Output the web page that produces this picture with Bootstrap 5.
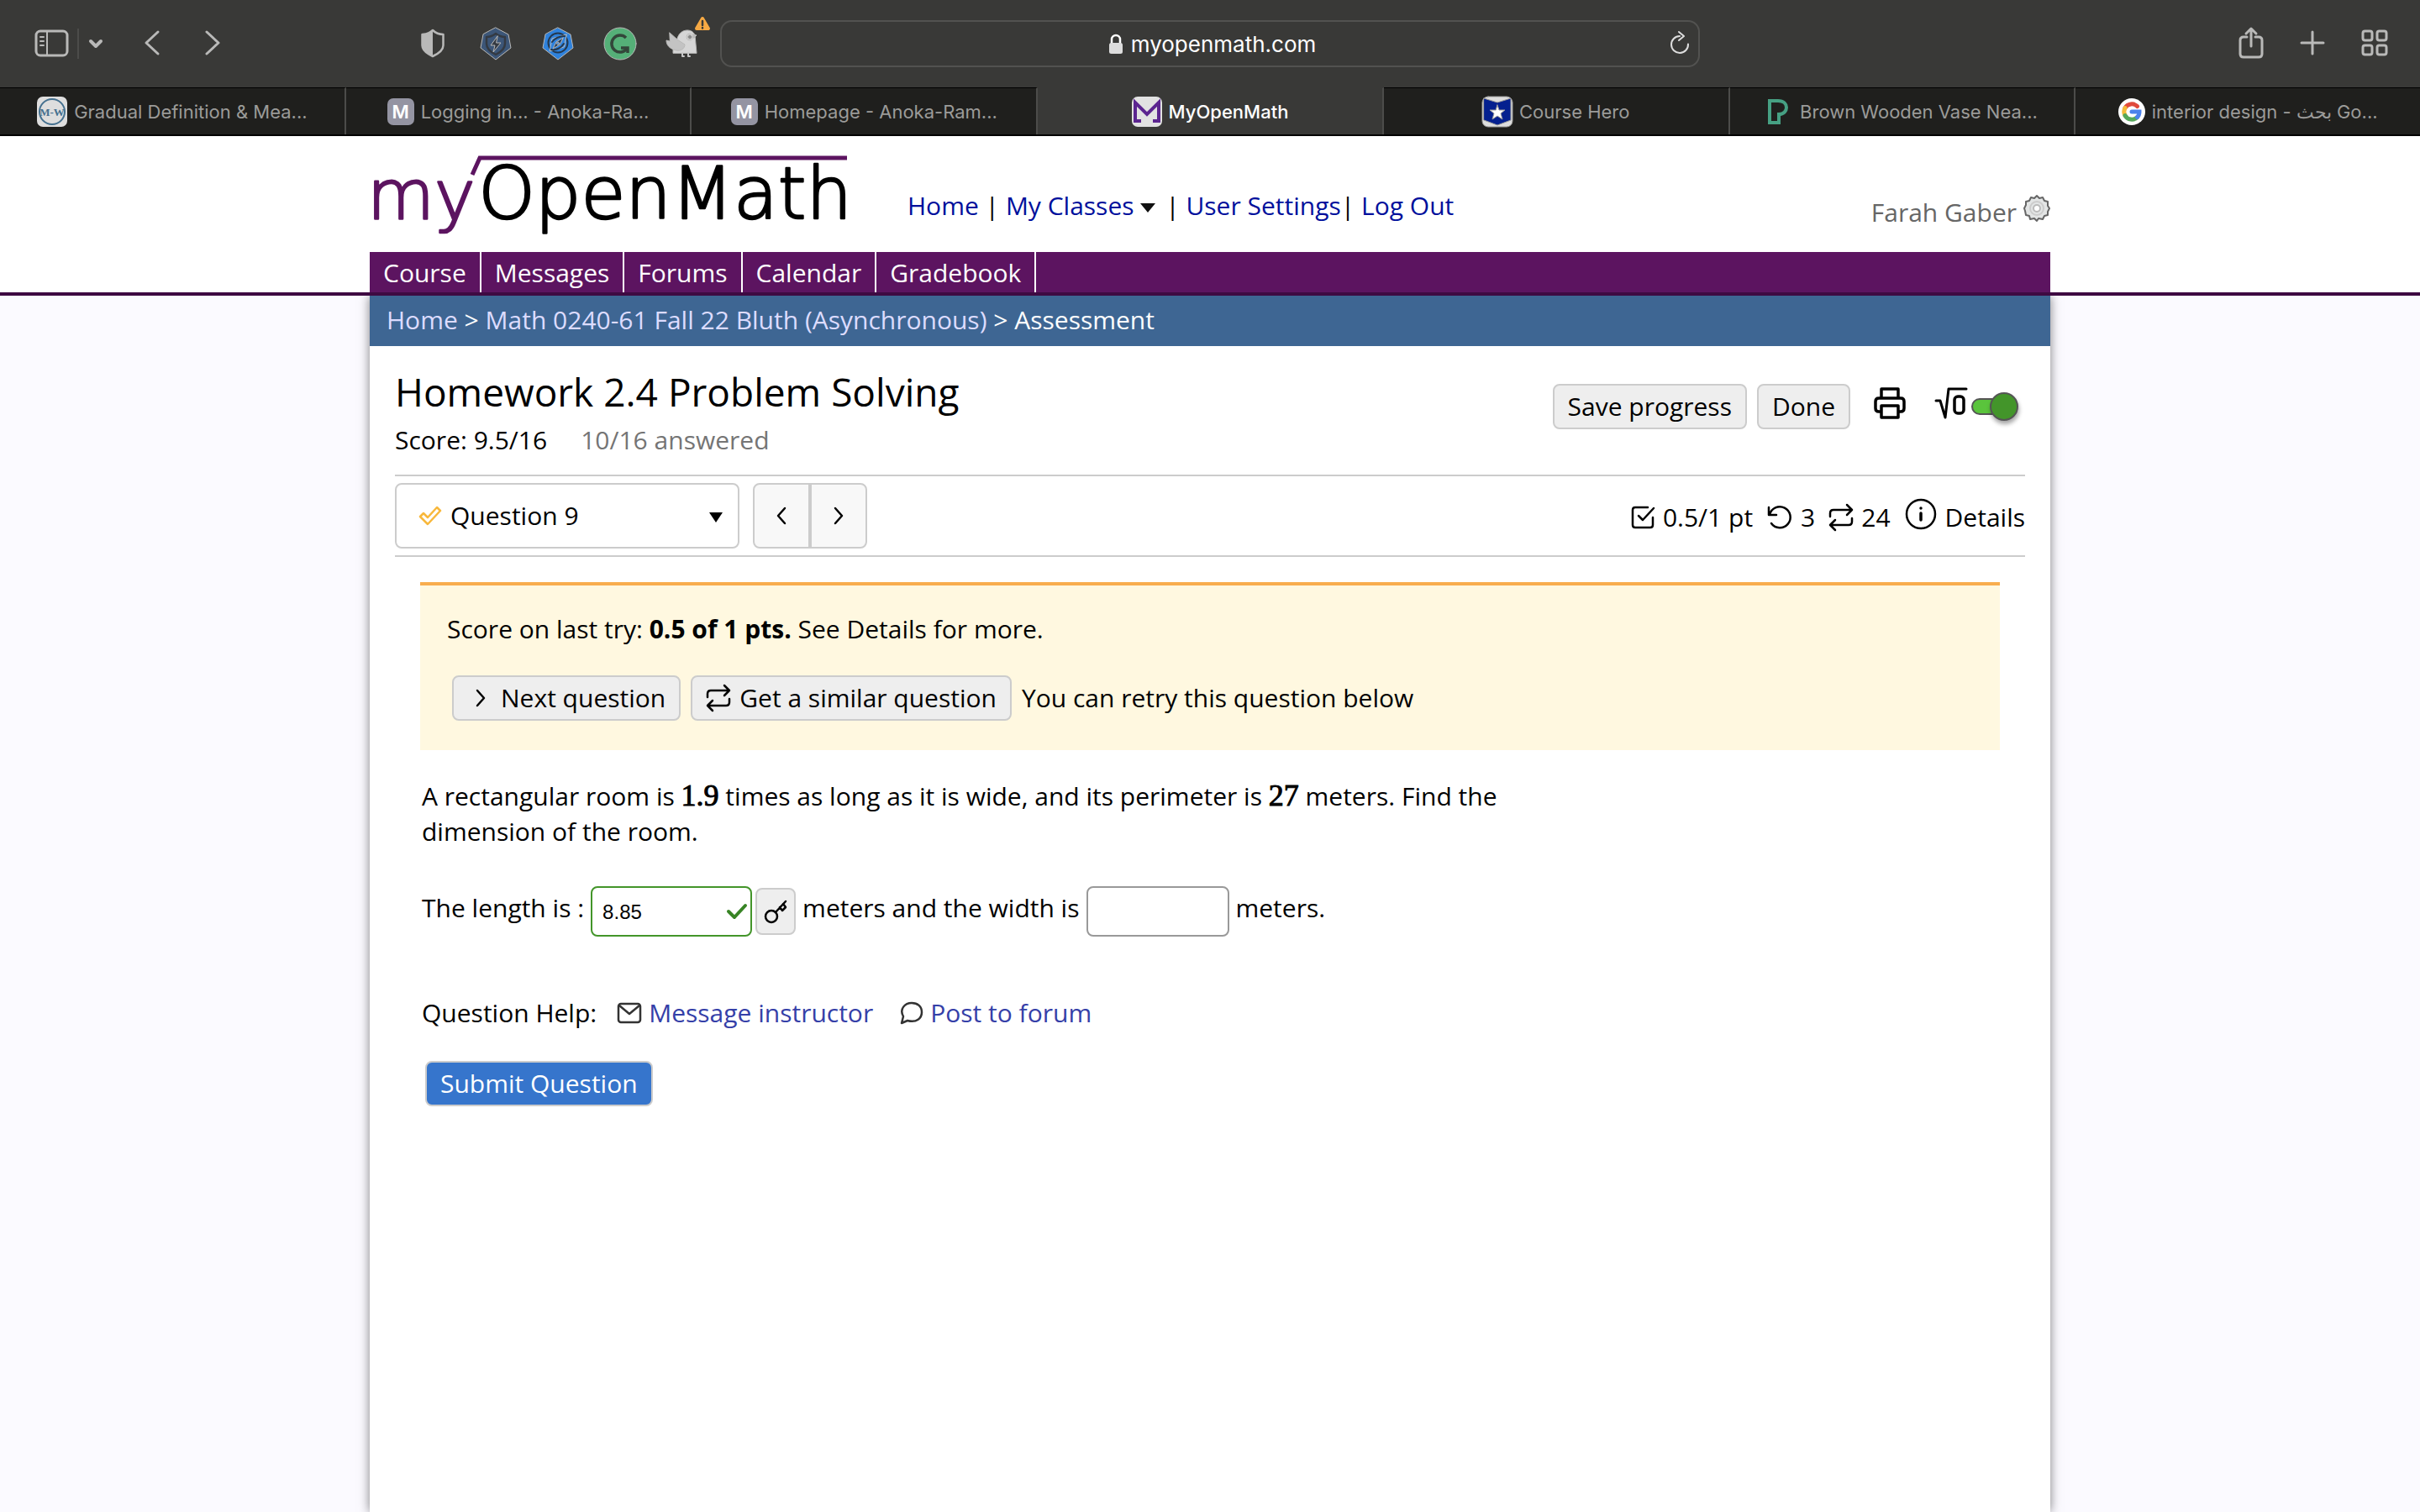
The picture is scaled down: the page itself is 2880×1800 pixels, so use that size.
<!DOCTYPE html>
<html lang="en">
<head>
<meta charset="utf-8">
<meta name="viewport" content="width=device-width, initial-scale=1">
<title>MyOpenMath</title>
<link href="https://cdn.jsdelivr.net/npm/bootstrap@5.3.0/dist/css/bootstrap.min.css" rel="stylesheet">
<style>
  :root { --text: "Open Sans", "Noto Sans", sans-serif; --chrome: Inter, "Noto Sans", sans-serif; --line: #ccc; }
  body { font-family: var(--text); font-size: 30px; line-height: 42px; color: #000; background: #fbfaff; min-height: 100vh; display: flex; flex-direction: column; }
  a { text-decoration: none; }
  svg { display: block; flex: none; fill: none; stroke: currentColor; stroke-linecap: round; stroke-linejoin: round; overflow: visible; }

  /* browser frame */
  .frame { font-family: var(--chrome); background: #393937; color: #b9b9b8; }
  .toolbar { height: 104px; display: grid; grid-template-columns: 1fr minmax(0, 1166px) 1fr; align-items: center; }
  .tools-start { padding: 0 26px 0 40px; }
  .tools-end { padding: 0 38px 2px 0; gap: 44px; }
  .extensions { gap: 36px; }
  .icon-btn { background: none; border: 0; padding: 0; display: flex; color: inherit; }
  .tool-sep { width: 2px; height: 36px; background: #4c4c4a; margin: 0 8px; }
  .history { gap: 52px; margin-left: 45px; }
  .address { height: 56px; border: 2px solid #525250; border-radius: 14px; color: #fff; font-size: 26px; position: relative; padding: 2px 0 0 4px; }
  .address .reload { position: absolute; right: 10px; top: 11px; color: #ddd; }
  .tab-strip { border-bottom: 2px solid #000; background: #1f1f1d; font-size: 22px; }
  .tab-item { flex: 1 1 0; min-width: 0; height: 56px; gap: 8px; color: #9b9b99; border-top: 1px solid #000; border-right: 2px solid #4c4c4a; white-space: nowrap; line-height: 32px; }
  .tab-item:hover { color: #ccc; }
  .tab-item:last-child { border-right: 0; }
  .tab-item.current { background: #393937; border-top-color: #393937; color: #fff; font-weight: 500; }
  .fav-m { width: 32px; height: 32px; border-radius: 7px; background: #9494a2; color: #fff; font-weight: 600; text-align: center; }

  /* site header */
  .wrap { width: 100%; max-width: 2000px; margin: 0 auto; }
  .site-head { background: #fff; border-bottom: 4px solid #3e0a42; }
  .brand-row { height: 138px; }
  .top-links { margin: 0 auto 34px 66px; }
  .top-links a { color: #00109c; }
  .account { color: #666; margin-bottom: 26px; gap: 8px; }
  .course-nav { background: #5c1460; }
  .course-nav a { color: #fff; padding: 1px 16px 0; line-height: 47px; border-right: 2px solid #fff; }
  .crumbs { background: #3e6693; color: #fff; padding: 8px 20px 10px; }
  .crumbs a { color: #dcdcff; }
  .sheet { background: #fff; flex: 1; box-shadow: 0 0 12px rgba(0,0,0,.5); clip-path: inset(0 -40px); }
  .sheet-body { padding: 27px 30px 0; }

  /* assessment */
  .title-text { font-size: 46px; line-height: 54px; font-weight: 400; margin: 0 0 10px; }
  .muted { color: #757575; margin-left: 40px; }
  .head-row { padding-bottom: 20px; }
  .head-tools { margin-top: 18px; gap: 12px; }
  .plain-btn { background: #eee; border: 2px solid var(--line); border-radius: 8px; height: 54px; padding: 0 16px; line-height: 48px; color: #000; display: inline-flex; align-items: center; }
  .submit-btn { background: #3675cc; color: #fff; }
  .q-bar { border-top: 2px solid var(--line); border-bottom: 2px solid var(--line); height: 98px; }
  .q-pick { position: relative; width: 410px; }
  .q-pick select { appearance: none; width: 100%; height: 78px; border: 2px solid var(--line); border-radius: 8px; background: #fff; padding: 0 64px; color: #000; }
  .q-pick .done-mark { position: absolute; left: 28px; top: 27px; color: #f8b83c; pointer-events: none; }
  .q-pick .caret { position: absolute; right: 20px; top: 35px; pointer-events: none; }
  .step-btn { width: 68px; height: 78px; border: 2px solid var(--line); background: #f8f8f8; color: #000; display: flex; align-items: center; justify-content: center; padding: 0; }
  .step-btn:first-child { border-radius: 8px 0 0 8px; }
  .step-btn:last-child { border-radius: 0 8px 8px 0; }
  .q-stats { gap: 17px; padding-top: 3px; }
  .q-stats > * { gap: 10px; }
  .q-stats a { color: #000; }
  .q-stats a svg { margin-top: -2px; }
  .score-box { border-top: 4px solid #f8ad4e; background: #fff8e0; margin: 30px 30px 0; padding: 31px 32px 35px; }
  .score-actions { margin: 34px 0 0 6px; gap: 12px; }
  .question { padding: 34px 32px 0; }
  .prompt { max-width: 1400px; margin: 0 0 44px; }
  .math { font-family: "Liberation Serif", serif; font-size: 36px; line-height: 32px; -webkit-text-stroke: 1px #000; }
  .answer-row { gap: 8px; }
  .answer { height: 60px; border: 2px solid #999; border-radius: 8px; font: 24px/32px "Liberation Sans", sans-serif; padding: 2px 12px 0; color: #000; }
  .answer.ok { width: 192px; border-color: #43952a; padding-right: 44px; }
  .answer.blank { width: 170px; }
  .answer-wrap { position: relative; }
  .answer-wrap svg { position: absolute; right: 6px; top: 21px; color: #388425; pointer-events: none; }
  .key-btn { width: 48px; height: 56px; border: 2px solid var(--line); border-radius: 8px; background: #eee; color: #000; padding: 0; display: flex; align-items: center; justify-content: center; }
  .help { margin: 70px 0 36px; gap: 24px; }
  .help a { color: #3540a8; gap: 8px; }
  .help svg { color: #333; }

  .math-switch { appearance: none; width: 56px; height: 36px; margin: 0; position: relative; }
  .math-switch::before { content: ""; position: absolute; left: 0; right: 4px; top: 8px; height: 20px; border: 2px solid #555; border-radius: 10px; background: #5ac43c; }
  .math-switch::after { content: ""; position: absolute; right: 0; top: 1px; width: 34px; height: 34px; border: 2px solid #555; border-radius: 50%; background: #43952a; box-shadow: 1px 4px 5px rgba(0,0,0,.35); }
</style>
</head>
<body>
<header class="frame">
  <div class="toolbar">
    <div class="tools-start d-flex align-items-center">
      <button class="icon-btn" type="button" aria-label="Sidebar"><svg width="44" height="36" viewBox="0 0 44 36" stroke-width="3"><rect x="3" y="3" width="37" height="29" rx="5"/><path d="M16 3v29M8 10h4M8 15h4M8 20h4" stroke-width="2"/></svg></button>
      <span class="tool-sep"></span>
      <button class="icon-btn" type="button" aria-label="Tab groups"><svg width="24" height="20" viewBox="0 0 24 20" stroke-width="4" stroke="#e4e4e4"><path d="M6 7l6 6 6-6"/></svg></button>
      <div class="history d-flex">
        <button class="icon-btn" type="button" aria-label="Back"><svg width="20" height="36" viewBox="0 0 20 36" stroke-width="3"><path d="M17 4L3 17l14 13"/></svg></button>
        <button class="icon-btn" type="button" aria-label="Forward"><svg width="20" height="36" viewBox="0 0 20 36" stroke-width="3"><path d="M3 4l14 13L3 30"/></svg></button>
      </div>
      <div class="extensions d-flex ms-auto">
        <button class="icon-btn" type="button" aria-label="Privacy report"><svg width="38" height="38" viewBox="0 0 38 38" stroke-width="2.500"><path d="M18 3C15 6 10 8 5.500 8v13c0 6 6 10 12.500 13 6.500-3 12.500-7 12.500-13V8C26 8 21 6 18 3z"/><path d="M18 3C15 6 10 8 5.500 8v13c0 6 6 10 12.500 13z" fill="currentColor" stroke="none"/></svg></button>
        <button class="icon-btn" type="button" aria-label="Ad blocker"><svg width="38" height="38" viewBox="0 0 38 38" stroke="none"><path d="M19 0l15 8 3 16-18 14L1 24 4 8z" fill="#3c5678"/><path d="M19 7c4 3 8 4 11 4v8c0 6-5 10-11 13-6-3-11-7-11-13v-8c3 0 7-1 11-4z" stroke="#343a42" stroke-width="2.500"/><path d="M21 10l-8 11h5l-2 8 9-11h-5z" fill="#343a42"/></svg></button>
        <button class="icon-btn" type="button" aria-label="Safe browsing"><svg width="38" height="38" viewBox="0 0 38 38" stroke="none"><path d="M19 0l15 8 3 16-18 14L1 24 4 8z" fill="#2f82dc"/><circle cx="19" cy="18" r="11.500" stroke="#24384e" stroke-width="2"/><path d="M29 8L12 13 9 28l17-5z" fill="#2f82dc"/><path d="M27 10c-6 0-12 3-15 7M11 26c6 1 12-2 15-7" stroke="#24384e" stroke-width="2"/><path d="M25 12l-8 5-4 8 8-5z" fill="#24384e"/><circle cx="19" cy="18.500" r="1.500" fill="#2f82dc"/></svg></button>
        <button class="icon-btn" type="button" aria-label="Grammar"><svg width="38" height="38" viewBox="0 0 38 38" stroke="none"><circle cx="19" cy="19" r="19" fill="#55b078"/><path d="M26 12a10 10 0 1 0 1 13" stroke="#33463a" stroke-width="3.500" stroke-linecap="butt"/><path d="M20 24h8v6" stroke="#33463a" stroke-width="3.500" stroke-linecap="butt" stroke-linejoin="miter"/></svg></button>
        <button class="icon-btn" type="button" aria-label="Bird, needs attention"><svg width="38" height="38" viewBox="0 0 38 38" stroke="none"><path d="M8 30V17l5-4C15 6 20 3 25 3c5 0 8 3 9 6l2 21z" fill="#d6d6d6"/><path d="M19 30v4h2M26 30v4h2" stroke="#c8c8c8" stroke-width="2"/><path d="M4 6l9 8 9 6c0 5-5 8-10 7C3 25 0 20 0 15l4 1z" fill="#c3c3c3"/><circle cx="28" cy="11" r="4" fill="#eee"/><circle cx="28" cy="11" r="2.500" fill="#888"/><path d="M32 8l4 1-3 3z" fill="#bbb"/><path d="M43-11l7 12H36z" fill="#f6a944" stroke="#f6a944" stroke-width="4"/><path d="M43-8v5M43 0v.5" stroke="#393937" stroke-width="2.500"/></svg></button>
      </div>
    </div>
    <div class="address d-flex align-items-center justify-content-center">
      <svg width="20" height="28" viewBox="0 0 20 28" class="me-2" stroke="#ddd"><path d="M5 13V8a5 5 0 0110 0v5" stroke-width="2.500"/><rect x="2" y="12" width="16" height="13" rx="2.500" fill="#ddd" stroke="none"/></svg>
      <span>myopenmath.com</span>
      <button class="icon-btn reload" type="button" aria-label="Reload"><svg width="24" height="28" viewBox="0 0 24 28" stroke-width="2"><path d="M12 6a10 10 0 1 0 10 9.500M11 1l6 5-6 5"/></svg></button>
    </div>
    <div class="tools-end d-flex align-items-center justify-content-end">
      <button class="icon-btn" type="button" aria-label="Share"><svg width="30" height="40" viewBox="0 0 30 40" stroke-width="3"><path d="M10 13H6q-4 0-4 4v16q0 4 4 4h18q4 0 4-4V17q0-4-4-4h-4M15 24V3M9 9l6-6 6 6"/></svg></button>
      <button class="icon-btn" type="button" aria-label="New tab"><svg width="28" height="28" viewBox="0 0 28 28" stroke-width="3"><path d="M14 1v26M1 14h26"/></svg></button>
      <button class="icon-btn" type="button" aria-label="Tab overview"><svg width="32" height="32" viewBox="0 0 32 32" stroke-width="3"><rect x="2" y="2" width="11" height="11" rx="2.500"/><rect x="19" y="2" width="11" height="11" rx="2.500"/><rect x="2" y="19" width="11" height="11" rx="2.500"/><rect x="19" y="19" width="11" height="11" rx="2.500"/></svg></button>
    </div>
  </div>
  <nav class="tab-strip d-flex" aria-label="Open tabs">
    <a href="#" class="tab-item d-flex align-items-center justify-content-center"><svg width="36" height="36" viewBox="0 0 36 36"><rect width="36" height="36" rx="7" fill="#dedede" stroke="none"/><circle cx="18" cy="18" r="15" stroke="#44708f" stroke-width="2"/><text x="18" y="23" text-anchor="middle" font-family="Liberation Serif, serif" font-size="13" font-weight="700" fill="#44708f" stroke="none">M-W</text></svg>Gradual Definition &amp; Mea...</a>
    <a href="#" class="tab-item d-flex align-items-center justify-content-center"><span class="fav-m">M</span>Logging in... - Anoka-Ra...</a>
    <a href="#" class="tab-item d-flex align-items-center justify-content-center"><span class="fav-m">M</span>Homepage - Anoka-Ram...</a>
    <a href="#" class="tab-item current d-flex align-items-center justify-content-center" aria-current="page"><svg width="36" height="36" viewBox="0 0 36 36"><rect width="36" height="36" rx="7" fill="#e2e2e2" stroke="none"/><path d="M11 29H4V7l14 14L32 7v22h-7" stroke="#5c2590" stroke-width="4" stroke-linecap="butt" stroke-linejoin="miter"/></svg>MyOpenMath</a>
    <a href="#" class="tab-item d-flex align-items-center justify-content-center"><svg width="36" height="36" viewBox="0 0 36 36" stroke="none"><rect width="36" height="36" rx="7" fill="#dedede"/><path d="M2 2l16 5 16-5v26l-16 6-16-6z" fill="#04208f"/><path d="M18 10l2 6h7l-5 4 2 7-6-4-6 4 2-7-5-4h7z" fill="#fff"/></svg>Course Hero</a>
    <a href="#" class="tab-item d-flex align-items-center justify-content-center"><svg class="me-1" width="28" height="32" viewBox="0 0 28 32"><path d="M4 3h10c7 0 10 4 10 8s-3 8-9 8v10H4z" stroke="#46a083" stroke-width="4" stroke-linejoin="miter"/></svg>Brown Wooden Vase Nea...</a>
    <a href="#" class="tab-item d-flex align-items-center justify-content-center"><svg width="32" height="32" viewBox="0 0 32 32" stroke-width="5" stroke-linecap="butt"><circle cx="16" cy="16" r="16" fill="#fff" stroke="none"/><path d="M22.500 9.500A9.200 9.200 0 0 0 8 11.500" stroke="#e04a3c"/><path d="M8 11.500a9.200 9.200 0 0 0 0 9" stroke="#f4bb3a"/><path d="M8 20.500a9.200 9.200 0 0 0 14.500 2" stroke="#55a85a"/><path d="M22.500 22.500a9 9 0 0 0 2.500-6.500h-9" stroke="#4b82ec" stroke-linejoin="miter"/></svg><span>interior design - <bdi>بحث</bdi> Go...</span></a>
  </nav>
</header>

<div class="site-head">
  <div class="wrap">
    <div class="brand-row d-flex align-items-end">
      <a href="#" aria-label="myOpenMath"><svg width="574" height="138" viewBox="0 0 574 138"><g font-family="DejaVu Sans" font-weight="200" stroke-width="2.500"><text x="-3" y="99" font-size="82" fill="#5c1460" stroke="#5c1460">my</text><text x="574" y="98" font-size="86" text-anchor="end" fill="#000" stroke="#000">OpenMath</text></g><path d="M122 46l9-20h437" stroke="#5c1460" stroke-width="5" stroke-linecap="butt" stroke-linejoin="miter"/></svg></a>
      <nav class="top-links"><a href="#">Home</a> | <a href="#">My Classes <svg class="d-inline-block me-1" width="18" height="12" viewBox="0 0 18 12" aria-hidden="true"><path d="M0 0h18l-9 11z" fill="#111" stroke="none"/></svg></a> | <a href="#">User Settings</a>| <a href="#">Log Out</a></nav>
      <div class="account d-flex">Farah Gaber
        <svg width="32" height="32" viewBox="0 0 32 32" stroke="#b4b4b4"><path d="M16 1l3 3 4-1 2 4 4 1v5l2 3-2 4v4l-4 1-2 4-5-1-2 3-3-3-5 1-1-4-4-1-1-5-1-3 2-4V8l4-1 2-4 4 1z" fill="#e3e5e5" stroke-width="2"/><circle cx="16" cy="16" r="8" stroke="#ccc" stroke-width="2"/><circle cx="16" cy="16" r="4" fill="#fff" stroke="#bbb" stroke-width="2"/></svg>
      </div>
    </div>
    <nav class="course-nav d-flex"><a href="#">Course</a><a href="#">Messages</a><a href="#">Forums</a><a href="#">Calendar</a><a href="#">Gradebook</a></nav>
  </div>
</div>

<main class="wrap sheet">
  <nav class="crumbs" aria-label="Breadcrumb"><a href="#">Home</a> &gt; <a href="#">Math 0240-61 Fall 22 Bluth (Asynchronous)</a> &gt; Assessment</nav>
  <div class="sheet-body">
    <div class="head-row d-flex justify-content-between align-items-start">
      <div>
        <h1 class="title-text">Homework 2.4 Problem Solving</h1>
        <div>Score: 9.5/16<span class="muted">10/16 answered</span></div>
      </div>
      <div class="head-tools d-flex align-items-center">
        <button class="plain-btn" type="button">Save progress</button>
        <button class="plain-btn" type="button">Done</button>
        <button class="icon-btn ms-3 mb-2" type="button" aria-label="Print"><svg width="38" height="38" viewBox="0 0 38 38" stroke="#000" stroke-width="3.500"><path d="M9 13V2h20v11M9 29H6q-4 0-4-4v-8q0-4 4-4h26q4 0 4 4v8q0 4-4 4h-3M9 22h20v14H9z"/></svg></button>
        <label class="d-flex align-items-center gap-1 ms-4 me-1 pe-1" for="mathinput" aria-label="Math entry"><svg class="mb-2" width="38" height="38" viewBox="0 0 38 38" stroke="#27661b" stroke-width="3"><path d="M0 16h5l6 20 4-34h21"/><rect x="22" y="11" width="11" height="20" rx="4" stroke-width="3.500"/></svg><input class="math-switch" id="mathinput" type="checkbox" role="switch" checked></label>
      </div>
    </div>
    <div class="q-bar d-flex align-items-center">
      <div class="q-pick">
        <select aria-label="Question"><option>Question 9</option></select>
        <svg class="done-mark" width="28" height="24" viewBox="0 0 28 24" stroke-width="2.500"><path d="M2 13l4-4 5 5L22 2l4 4-15 16z"/></svg>
        <svg class="caret" width="16" height="12" viewBox="0 0 16 12"><path d="M0 0h16l-8 12z" fill="#000" stroke="none"/></svg>
      </div>
      <div class="d-flex ms-3">
        <button class="step-btn" type="button" aria-label="Previous question"><svg width="12" height="20" viewBox="0 0 12 20" stroke-width="2.500"><path d="M10 1L2 10l8 9"/></svg></button>
        <button class="step-btn" type="button" aria-label="Next question"><svg width="12" height="20" viewBox="0 0 12 20" stroke-width="2.500"><path d="M2 1l8 9-8 9"/></svg></button>
      </div>
      <div class="q-stats d-flex ms-auto">
        <span class="d-flex align-items-center"><svg width="28" height="28" viewBox="0 0 28 28" stroke-width="2.500"><path d="M20 2H5Q2 2 2 5v18q0 3 3 3h18q3 0 3-3V14M9 12l5 5L27 3"/></svg>0.5/1 pt</span>
        <span class="d-flex align-items-center"><svg width="30" height="30" viewBox="0 0 30 30" stroke-width="2.500"><path d="M2 3v9h9M3 12A12.500 12.500 0 1 1 5 22"/></svg>3</span>
        <span class="d-flex align-items-center"><svg width="28" height="32" viewBox="0 0 28 32" stroke-width="2.500"><path d="M21 1l6 6-6 6M1 15v-4q0-4 4-4h22M7 31l-6-6 6-6M27 17v4q0 4-4 4H1"/></svg>24</span>
        <a class="d-flex" href="#"><svg width="38" height="38" viewBox="0 0 38 38" stroke-width="2.500"><circle cx="19" cy="19" r="17"/><path d="M19 18v8M19 12v0" stroke-width="3.500"/></svg>Details</a>
      </div>
    </div>
    <section class="score-box">
      <div>Score on last try: <strong>0.5 of 1 pts.</strong> See Details for more.</div>
      <div class="score-actions d-flex align-items-center">
        <button class="plain-btn" type="button"><svg width="32" height="20" viewBox="0 0 32 20" class="me-2" stroke-width="2.500"><path d="M12 1l8 9-8 9"/></svg>Next question</button>
        <button class="plain-btn" type="button"><svg width="32" height="32" viewBox="0 0 32 32" class="me-2" stroke-width="2.500"><path d="M22 1l6 6-6 6M2 15v-4q0-4 4-4h22M8 31l-6-6 6-6M28 17v4q0 4-4 4H2"/></svg>Get a similar question</button>
        <span>You can retry this question below</span>
      </div>
    </section>
    <form class="question">
      <p class="prompt">A rectangular room is <span class="math">1.9</span> times as long as it is wide, and its perimeter is <span class="math">27</span> meters. Find the dimension of the room.</p>
      <div class="answer-row d-flex align-items-center">
        <label class="mb-2" for="len">The length is :</label>
        <div class="d-flex align-items-center gap-1">
          <div class="answer-wrap d-flex"><input class="answer ok" id="len" type="text" value="8.85"><svg width="24" height="20" viewBox="0 0 24 20" stroke-width="4" stroke-linecap="butt" stroke-linejoin="miter"><path d="M2 9l7 7L22 2"/></svg></div>
          <button class="key-btn" type="button" aria-label="Show answer"><svg width="26" height="28" viewBox="0 0 26 28" stroke-width="2.500"><circle cx="8" cy="20" r="7"/><path d="M13 15L25 2M18 9l3 4 4-4-3-4"/></svg></button>
        </div>
        <label class="mb-2" for="wid">meters and the width is</label>
        <input class="answer blank" id="wid" type="text">
        <label class="mb-2" for="wid">meters.</label>
      </div>
      <div class="help d-flex align-items-center">
        <span>Question Help:</span>
        <a class="d-flex align-items-center" href="#"><svg width="30" height="26" viewBox="0 0 30 26" stroke-width="2.500"><rect x="2" y="2" width="26" height="22" rx="3"/><path d="M3 4l12 10L27 4"/></svg>Message instructor</a>
        <a class="d-flex align-items-center ms-2" href="#"><svg width="28" height="28" viewBox="0 0 28 28" stroke-width="2.500"><path d="M2 26l2-8C-1 9 6 2 14 2c7 0 12 4 12 11s-6 13-17 10z"/></svg>Post to forum</a>
      </div>
      <button class="plain-btn submit-btn ms-1" type="button">Submit Question</button>
    </form>
  </div>
</main>
<script src="https://cdn.jsdelivr.net/npm/bootstrap@5.3.0/dist/js/bootstrap.bundle.min.js"></script>
</body>
</html>
